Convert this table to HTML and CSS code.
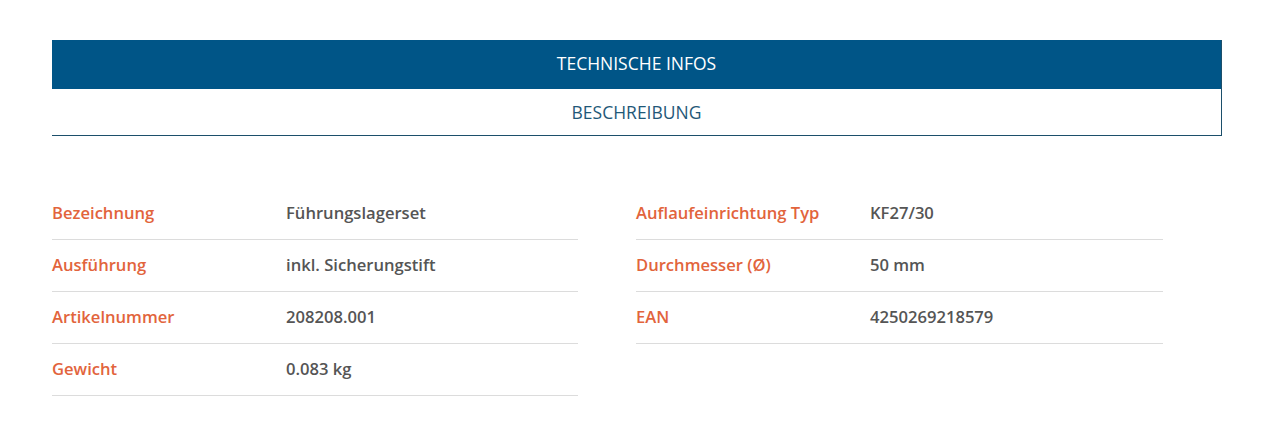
FILE: index.html
```html
<!DOCTYPE html>
<html lang="de">
<head>
    <meta charset="UTF-8">
    <meta name="viewport" content="width=device-width, initial-scale=1.0">
    <title>Technische Infos</title>
    <link rel="stylesheet" href="styles.css">
</head>
<body>
    <div class="product-tabs">
        <div class="tab tab-active">TECHNISCHE INFOS</div>
        <div class="tab">BESCHREIBUNG</div>
    </div>

    <div class="specs">
        <div class="spec-col">
            <div class="spec-row">
                <span class="spec-label">Bezeichnung</span>
                <span class="spec-value">Führungslagerset</span>
            </div>
            <div class="spec-row">
                <span class="spec-label">Ausführung</span>
                <span class="spec-value">inkl. Sicherungstift</span>
            </div>
            <div class="spec-row">
                <span class="spec-label">Artikelnummer</span>
                <span class="spec-value">208208.001</span>
            </div>
            <div class="spec-row">
                <span class="spec-label">Gewicht</span>
                <span class="spec-value">0.083 kg</span>
            </div>
        </div>
        <div class="spec-col">
            <div class="spec-row">
                <span class="spec-label">Auflaufeinrichtung Typ</span>
                <span class="spec-value">KF27/30</span>
            </div>
            <div class="spec-row">
                <span class="spec-label">Durchmesser (Ø)</span>
                <span class="spec-value">50 mm</span>
            </div>
            <div class="spec-row">
                <span class="spec-label">EAN</span>
                <span class="spec-value">4250269218579</span>
            </div>
        </div>
    </div>
</body>
</html>
```

FILE: styles.css
```css
body {
    font-family: "Open Sans", Arial, sans-serif;
    margin: 0;
    padding: 40px 42px 0 52px;
    background: #fff;
}
.product-tabs {
    display: flex;
    flex-direction: column;
    border-bottom: 1px solid #1c4f6b;
    border-right: 1px solid #1c4f6b;
}
.tab {
    height: 46px;
    display: flex;
    align-items: center;
    justify-content: center;
    box-sizing: border-box;
    font-size: 17.5px;
    color: #1f5878;
}
.tab-active {
    height: 49px;
    padding-bottom: 3px;
    background-color: #005587;
    color: #fff;
}
.specs {
    display: grid;
    grid-template-columns: 1fr 1fr;
    margin-top: 52px;
}
.spec-col {
    width: 526px;
}
.spec-col + .spec-col {
    margin-left: -1px;
    width: 527px;
}
.spec-row {
    display: grid;
    grid-template-columns: 234px 1fr;
    align-items: center;
    height: 51px;
    padding-bottom: 2px;
    box-sizing: border-box;
    border-bottom: 1px solid #dcdcdc;
    font-size: 16.6px;
    font-weight: 600;
}
.spec-row {
    height: 52px;
}
.spec-label {
    color: #e2643c;
}
.spec-value {
    color: #555;
}
```
